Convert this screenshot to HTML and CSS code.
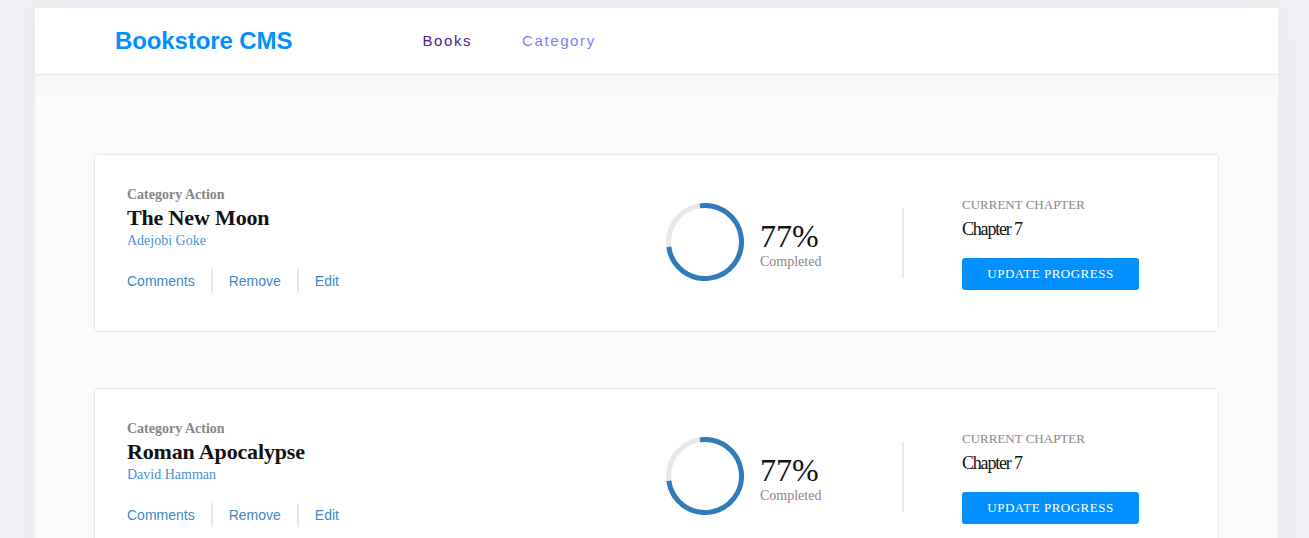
FILE: index.html
```html
<!DOCTYPE html>
<html lang="en">
<head>
<meta charset="utf-8">
<title>Bookstore CMS</title>
<link rel="stylesheet" href="styles.css">
</head>
<body>
<div class="app">
  <header class="header">
    <h1 class="logo">Bookstore CMS</h1>
    <nav class="nav">
      <a class="nav-link visited" href="#">Books</a>
      <a class="nav-link" href="#">Category</a>
    </nav>
  </header>
  <main class="main">
    <section class="panel">
      <article class="card">
        <div class="info">
          <p class="category">Category Action</p>
          <h2 class="title">The New Moon</h2>
          <p class="author">Adejobi Goke</p>
          <ul class="actions">
            <li><a href="#">Comments</a></li>
            <li><a href="#">Remove</a></li>
            <li><a href="#">Edit</a></li>
          </ul>
        </div>
        <div class="progress">
          <svg class="ring" width="78" height="78" viewBox="0 0 78 78">
            <circle cx="39" cy="39" r="36.5" fill="none" stroke="#e8e8e8" stroke-width="5"/>
            <circle cx="39" cy="39" r="36.5" fill="none" stroke="#307bbe" stroke-width="5" stroke-dasharray="172 230" transform="rotate(-98 39 39)"/>
          </svg>
          <div class="percent">
            <span class="value">77%</span>
            <span class="done">Completed</span>
          </div>
        </div>
        <div class="divider"></div>
        <div class="chapter">
          <span class="chapter-label">Current Chapter</span>
          <span class="chapter-name">Chapter 7</span>
          <button class="update">Update progress</button>
        </div>
      </article>
      <article class="card">
        <div class="info">
          <p class="category">Category Action</p>
          <h2 class="title">Roman Apocalypse</h2>
          <p class="author">David Hamman</p>
          <ul class="actions">
            <li><a href="#">Comments</a></li>
            <li><a href="#">Remove</a></li>
            <li><a href="#">Edit</a></li>
          </ul>
        </div>
        <div class="progress">
          <svg class="ring" width="78" height="78" viewBox="0 0 78 78">
            <circle cx="39" cy="39" r="36.5" fill="none" stroke="#e8e8e8" stroke-width="5"/>
            <circle cx="39" cy="39" r="36.5" fill="none" stroke="#307bbe" stroke-width="5" stroke-dasharray="172 230" transform="rotate(-98 39 39)"/>
          </svg>
          <div class="percent">
            <span class="value">77%</span>
            <span class="done">Completed</span>
          </div>
        </div>
        <div class="divider"></div>
        <div class="chapter">
          <span class="chapter-label">Current Chapter</span>
          <span class="chapter-name">Chapter 7</span>
          <button class="update">Update progress</button>
        </div>
      </article>
    </section>
  </main>
</div>
</body>
</html>
```
FILE: styles.css
```css
* { box-sizing: border-box; }
html, body { margin: 0; padding: 0; }
body {
  background: #eef0f4;
  font-family: "Liberation Serif", serif;
  overflow: hidden;
  height: 538px;
}
.app {
  width: 1243px;
  margin: 8px 0 0 35px;
  background: #f8f8f8;
  box-shadow: 0 0 24px rgba(30, 40, 80, 0.04);
  min-height: 600px;
}
.header {
  height: 67px;
  background: #fff;
  border-bottom: 1px solid #e6e6e6;
  display: flex;
  align-items: center;
  padding: 0 0 1px 80px;
}
.logo {
  margin: 0;
  font-family: "Liberation Sans", Arial, sans-serif;
  font-weight: 700;
  font-size: 24px;
  color: #0290ff;
  letter-spacing: -0.1px;
}
.nav {
  display: flex;
  gap: 50px;
  margin-left: 130px;
}
.nav-link {
  font-family: "Liberation Sans", Arial, sans-serif;
  font-size: 15px;
  letter-spacing: 1.6px;
  text-decoration: none;
  color: #8080f6;
}
.nav-link.visited { color: #551a8b; }
.main {
  padding: 21px 2px 0 2px;
}
.panel {
  background: #fafafa;
  border-top: 1px solid #fff;
  padding: 57px 57px 40px 57px;
  display: flex;
  flex-direction: column;
  gap: 56px;
}
.card {
  height: 178px;
  background: #fff;
  border: 1px solid #e8e8e8;
  border-radius: 4px;
  display: flex;
  align-items: center;
  padding: 0 79px 0 32px;
}
.info {
  flex: 1;
  align-self: flex-start;
  margin-top: 31px;
}
.category {
  margin: 0;
  font-weight: 700;
  font-size: 14px;
  line-height: 18px;
  color: #868686;
}
.title {
  margin: 2px 0 0 0;
  font-weight: 700;
  font-size: 22px;
  line-height: 24px;
  color: #121212;
  letter-spacing: -0.15px;
}
.author {
  margin: 2px 0 0 0;
  font-size: 14px;
  line-height: 18px;
  color: #4a8fd8;
}
.actions {
  list-style: none;
  margin: 19px 0 0 0;
  padding: 0;
  display: flex;
}
.actions li {
  height: 24px;
  display: flex;
  align-items: center;
  padding: 0 16px;
  border-right: 2px solid #e8e8e8;
}
.actions li:first-child { padding-left: 0; }
.actions li:last-child { border-right: none; }
.actions a {
  font-family: "Liberation Sans", Arial, sans-serif;
  font-size: 14px;
  color: #4386c5;
  text-decoration: none;
}
.progress {
  display: flex;
  align-items: center;
  gap: 16px;
  width: 236px;
  margin-top: -2px;
}
.ring { display: block; }
.percent {
  display: flex;
  flex-direction: column;
  margin-top: 4px;
}
.value {
  font-size: 32px;
  line-height: 34px;
  color: #121212;
  margin-bottom: 1px;
}
.done {
  font-size: 14px;
  line-height: 16px;
  color: #888;
}
.divider {
  width: 2px;
  height: 70px;
  background: #e8e8e8;
  margin-top: -1px;
}
.chapter {
  margin-left: 58px;
  width: 177px;
  display: flex;
  flex-direction: column;
  align-items: flex-start;
  margin-top: 1px;
}
.chapter-label {
  font-size: 13px;
  line-height: 16px;
  text-transform: uppercase;
  color: #888;
}
.chapter-name {
  font-size: 18px;
  line-height: 20px;
  letter-spacing: -1.2px;
  color: #121212;
  margin-top: 6px;
}
.update {
  margin-top: 19px;
  width: 177px;
  height: 32px;
  border: none;
  border-radius: 3px;
  background: #0290ff;
  color: #fff;
  font-family: "Liberation Serif", serif;
  font-size: 13px;
  letter-spacing: 0.5px;
  text-transform: uppercase;
  cursor: pointer;
}
```
